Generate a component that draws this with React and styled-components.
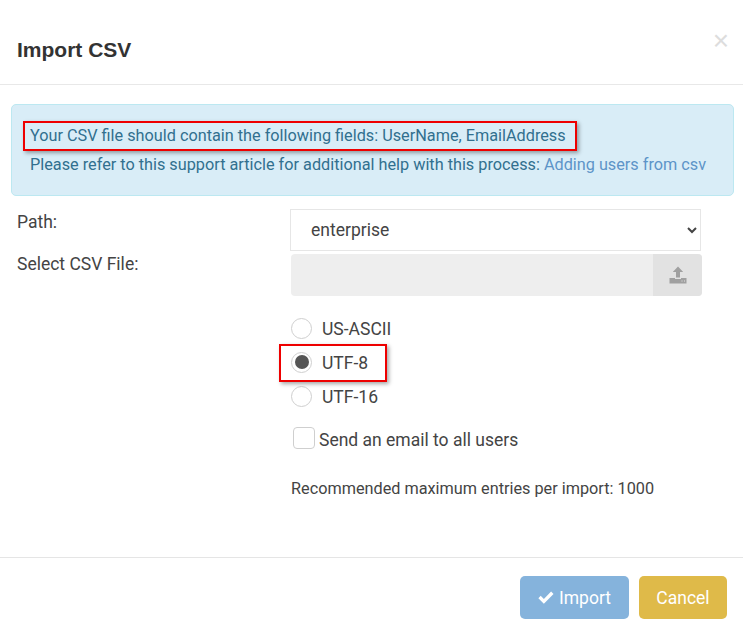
import React from "react";
import styled, { createGlobalStyle } from "styled-components";

const GlobalStyle = createGlobalStyle`
  html, body {
    margin: 0;
    padding: 0;
    background: #fff;
  }
  * {
    box-sizing: border-box;
  }
`;

const Modal = styled.div`
  width: 743px;
  height: 637px;
  display: flex;
  flex-direction: column;
  font-family: "Roboto", sans-serif;
  font-size: 16.25px;
  color: #444;
  background: #fff;
  overflow: hidden;
`;

const Header = styled.div`
  height: 85px;
  flex: none;
  display: flex;
  justify-content: space-between;
  padding: 37px 14px 0 17px;
  border-bottom: 1px solid #e8e8e8;
`;

const Title = styled.h4`
  margin: 0;
  font-family: "Liberation Sans", Arial, sans-serif;
  font-size: 21px;
  line-height: 26px;
  font-weight: 700;
  color: #333;
`;

const Close = styled.span`
  font-family: "Liberation Sans", Arial, sans-serif;
  font-size: 28px;
  line-height: 21px;
  margin-top: -7px;
  color: #ddd;
`;

const Body = styled.div`
  flex: 1;
  padding: 19px 9px 0 11px;
`;

const Alert = styled.div`
  height: 92px;
  padding: 17px 18px 0;
  background: #d9edf7;
  border: 1px solid #bce8f1;
  border-radius: 5px;
  color: #31708f;
  line-height: 28px;
`;

const AlertLine = styled.div`
  height: 29px;
`;

const Link = styled.a`
  color: #5d94c8;
  text-decoration: none;
`;

const Marked = styled.span`
  position: relative;
  display: inline-flex;

  &::after {
    content: "";
    position: absolute;
    top: ${(p) => p.$top}px;
    right: ${(p) => p.$right}px;
    bottom: ${(p) => p.$bottom}px;
    left: ${(p) => p.$left}px;
    border: 2px solid #ee0000;
    box-shadow: 2px 2px 4px rgba(0, 0, 0, 0.35);
    pointer-events: none;
  }
`;

const Form = styled.div`
  display: grid;
  grid-template-columns: 279px 412px;
  margin-top: 13px;
`;

const Label = styled.label`
  padding: 0 0 0 6px;
  font-size: 17.5px;
  line-height: 27px;
  color: #444;
`;

const PathSelect = styled.select`
  display: block;
  width: 411px;
  height: 42px;
  padding: 0 16px;
  font-family: "Roboto", sans-serif;
  font-size: 17.5px;
  color: #444;
  background: #fff;
  border: 1px solid #e6e6e6;
  border-radius: 0;
  outline: none;
`;

const FileRow = styled.div`
  display: flex;
  height: 42px;
  margin: 3px 0 0 1px;
  background: #eee;
  border-radius: 4px;
  overflow: hidden;
  justify-content: flex-end;
`;

const UploadButton = styled.div`
  width: 49px;
  display: flex;
  align-items: center;
  justify-content: center;
  background: #e2e2e2;
  color: #a0a0a0;
`;

const Options = styled.div`
  grid-column: 2;
  padding: 16px 0 0 1px;
`;

const RadioRow = styled.div`
  height: 34px;
  display: flex;
  align-items: center;
  gap: 10px;
  font-size: 17.5px;
  color: #444;
`;

const RadioCircle = styled.span`
  width: 21px;
  height: 21px;
  flex: none;
  display: flex;
  align-items: center;
  justify-content: center;
  margin-bottom: 2px;
  border: 1px solid #cfcfcf;
  border-radius: 50%;
  background: #fff;

  &::after {
    content: "";
    width: 14px;
    height: 14px;
    border-radius: 50%;
    background: ${(p) => (p.$checked ? "#555" : "transparent")};
  }
`;

const CheckRow = styled.div`
  display: flex;
  align-items: flex-start;
  gap: 4px;
  margin: 13px 0 0 2px;
  font-size: 17.5px;
  color: #444;
`;

const CheckBox = styled.span`
  width: 22px;
  height: 22px;
  flex: none;
  border: 1px solid #cfcfcf;
  border-radius: 4px;
  background: #fff;
`;

const CheckText = styled.span`
  padding-top: 3px;
  line-height: 21px;
`;

const Note = styled.p`
  margin: 27px 0 0;
  line-height: 22px;
  color: #444;
`;

const Footer = styled.div`
  height: 80px;
  flex: none;
  display: flex;
  justify-content: flex-end;
  gap: 10px;
  padding: 18px 16px 0 0;
  border-top: 1px solid #e5e5e5;
`;

const Button = styled.button`
  width: ${(p) => p.$width}px;
  height: 43px;
  display: flex;
  align-items: center;
  justify-content: center;
  gap: 5px;
  padding: 0;
  border: none;
  border-radius: 5px;
  font-family: "Roboto", sans-serif;
  font-size: 17.5px;
  color: #fff;
  background: ${(p) => p.$color};
`;

const UploadIcon = () => (
  <svg width="18" height="18" viewBox="0 0 18 18">
    <path fill="currentColor" d="M9 0.5 L14.2 6 H11 V11.5 H7 V6 H3.8 Z" />
    <path fill="currentColor" d="M0.5 12 H6 V13 H12 V12 H17.5 V17.5 H0.5 Z" />
    <path fill="#e2e2e2" d="M12.5 14.5 H13.5 V15.5 H12.5 Z M15 14.5 H16 V15.5 H15 Z" />
  </svg>
);

const CheckIcon = () => (
  <svg width="16" height="13" viewBox="0 0 17 14" fill="currentColor">
    <path d="M6.2 13.6 L0.3 7.7 L2.8 5.2 L6.2 8.6 L14 0.6 L16.6 3.2 Z" />
  </svg>
);

const encodings = ["US-ASCII", "UTF-8", "UTF-16"];

const App = () => {
  return (
    <Modal>
      <GlobalStyle />
      <Header>
        <Title>Import CSV</Title>
        <Close>×</Close>
      </Header>
      <Body>
        <Alert>
          <AlertLine>
            <Marked $top={-1} $right={-11} $bottom={-1} $left={-7}>
              Your CSV file should contain the following fields: UserName, EmailAddress
            </Marked>
          </AlertLine>
          <AlertLine>
            Please refer to this support article for additional help with this process:{" "}
            <Link href="#">Adding users from csv</Link>
          </AlertLine>
        </Alert>
        <Form>
          <Label>Path:</Label>
          <PathSelect defaultValue="enterprise">
            <option>enterprise</option>
          </PathSelect>
          <Label>Select CSV File:</Label>
          <FileRow>
            <UploadButton>
              <UploadIcon />
            </UploadButton>
          </FileRow>
          <Options>
            {encodings.map((name) => (
              <RadioRow key={name}>
                {name === "UTF-8" ? (
                  <Marked $top={-8} $right={-75} $bottom={-7} $left={-12}>
                    <RadioCircle $checked />
                  </Marked>
                ) : (
                  <RadioCircle />
                )}
                {name}
              </RadioRow>
            ))}
            <CheckRow>
              <CheckBox />
              <CheckText>Send an email to all users</CheckText>
            </CheckRow>
            <Note>Recommended maximum entries per import: 1000</Note>
          </Options>
        </Form>
      </Body>
      <Footer>
        <Button $width={109} $color="#85b3dc">
          <CheckIcon />
          Import
        </Button>
        <Button $width={88} $color="#dfba49">
          Cancel
        </Button>
      </Footer>
    </Modal>
  );
};

export default App;
